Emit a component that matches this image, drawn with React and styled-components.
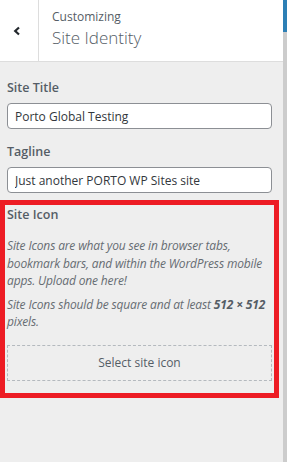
import React from 'react';
import styled, { createGlobalStyle } from 'styled-components';

const Global = createGlobalStyle`
  html, body { margin: 0; padding: 0; background: #eeeeee; }
  body { font-family: "Open Sans", "Noto Sans", sans-serif; }
  * { box-sizing: border-box; }
`;

const Frame = styled.div`
  display: flex;
  width: 287px;
  height: 462px;
  background: #eeeeee;
  overflow: hidden;
`;

const Panel = styled.div`
  width: 283px;
  display: flex;
  flex-direction: column;
`;

const Track = styled.div`
  width: 4px;
  background: #cccccc;
  display: flex;
  flex-direction: column;
`;

const Thumb = styled.div`
  height: 32px;
  background: #2d7fb5;
`;

const Header = styled.header`
  display: flex;
  height: 62px;
  background: #ffffff;
  border-bottom: 1px solid #dddddd;
`;

const BackButton = styled.button`
  width: 39px;
  border: 0;
  border-right: 1px solid #dddddd;
  background: #ffffff;
  padding: 0 0 0 13px;
  display: flex;
  align-items: center;
  justify-content: flex-start;
  color: #23282d;
`;

const TitleBlock = styled.div`
  padding: 9px 0 0 13px;
  display: flex;
  flex-direction: column;
`;

const Crumb = styled.span`
  font-size: 12px;
  line-height: 16px;
  color: #555d66;
`;

const Title = styled.h1`
  margin: 0;
  font-size: 17px;
  line-height: 26px;
  font-weight: 300;
  color: #555d66;
`;

const Body = styled.div`
  padding: 16px 11px 0 7px;
  display: flex;
  flex-direction: column;
`;

const Field = styled.div`
  display: flex;
  flex-direction: column;
  margin-bottom: ${p => p.$gap || 13}px;
`;

const Label = styled.label`
  font-size: 12.5px;
  line-height: 20px;
  font-weight: 600;
  color: #555d66;
  margin-bottom: 5px;
`;

const Input = styled.input`
  height: 26px;
  width: 100%;
  border: 1px solid #8c8f94;
  border-radius: 4px;
  background: #ffffff;
  padding: 0 7px;
  font-family: inherit;
  font-size: 12px;
  color: #32373c;
  outline: none;
`;

const IconSection = styled.section`
  margin: 0 -7px;
  border: 5px solid #ed1c24;
  padding: 0 2px 12px;
  display: flex;
  flex-direction: column;
`;

const Note = styled.p`
  margin: ${p => p.$first ? '7px' : '0'} 0 ${p => p.$last ? '14px' : '6px'};
  font-size: 12px;
  line-height: 17.5px;
  letter-spacing: -0.15px;
  font-style: italic;
  color: #666c72;
  strong { color: #555d66; font-weight: 700; }
`;

const SelectButton = styled.button`
  height: 36px;
  width: 100%;
  border: 1px dashed #b4b9be;
  background: transparent;
  font-family: inherit;
  font-size: 12px;
  color: #555d66;
`;

export default function App() {
  return (
    <Frame>
      <Global />
      <Panel>
        <Header>
          <BackButton aria-label="Back">
            <svg width="8" height="10" viewBox="0 0 8 10">
              <polyline points="6,1.5 2.2,5 6,8.5" fill="none" stroke="#23282d" strokeWidth="2.2" />
            </svg>
          </BackButton>
          <TitleBlock>
            <Crumb>Customizing</Crumb>
            <Title>Site Identity</Title>
          </TitleBlock>
        </Header>
        <Body>
          <Field>
            <Label>Site Title</Label>
            <Input defaultValue="Porto Global Testing" />
          </Field>
          <Field $gap={7}>
            <Label>Tagline</Label>
            <Input defaultValue="Just another PORTO WP Sites site" />
          </Field>
          <IconSection>
            <Label>Site Icon</Label>
            <Note $first>Site Icons are what you see in browser tabs, bookmark bars, and within the WordPress mobile apps. Upload one here!</Note>
            <Note $last>Site Icons should be square and at least <strong>512 × 512</strong> pixels.</Note>
            <SelectButton>Select site icon</SelectButton>
          </IconSection>
        </Body>
      </Panel>
      <Track><Thumb /></Track>
    </Frame>
  );
}
